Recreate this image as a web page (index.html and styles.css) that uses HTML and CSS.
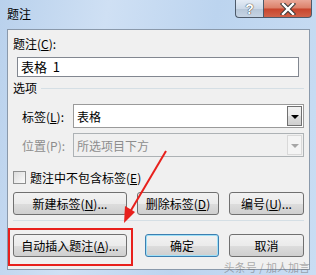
FILE: index.html
```html
<!DOCTYPE html>
<html lang="zh-CN">
<head>
	<meta charset="UTF-8">
	<title>题注</title>
	<link rel="stylesheet" href="styles.css">
</head>
<body>
	<div class="window">
		<div class="titlebar">
			<div class="title">题注</div>
			<div class="btn_help">?</div>
			<div class="btn_close">
				<svg width="16" height="12" viewBox="0 0 16 12">
					<path d="M3 1 L13 11 M13 1 L3 11" stroke="#3a3a3a" stroke-width="4.4" stroke-linecap="square"/>
					<path d="M3 1 L13 11 M13 1 L3 11" stroke="#fff" stroke-width="2.4" stroke-linecap="square"/>
				</svg>
			</div>
		</div>
		<div class="client">
			<div class="label_top">题注(<u>C</u>):</div>
			<div class="textbox">表格&nbsp;&nbsp;1</div>
			<div class="group">
				<span>选项</span>
				<div class="group_line"></div>
			</div>
			<div class="row row_first">
				<div class="row_label">标签(<u>L</u>):</div>
				<div class="combo">
					<span>表格</span>
					<div class="combo_btn"><i class="arrow"></i></div>
				</div>
			</div>
			<div class="row disabled">
				<div class="row_label">位置(P):</div>
				<div class="combo">
					<span>所选项目下方</span>
					<div class="combo_btn"><i class="arrow"></i></div>
				</div>
			</div>
			<div class="check_row">
				<div class="checkbox"></div>
				<span>题注中不包含标签(<u>E</u>)</span>
			</div>
			<div class="btn_row">
				<div class="btn w_new">新建标签(<u>N</u>)...</div>
				<div class="btn w_del">删除标签(<u>D</u>)</div>
				<div class="btn w_num">编号(<u>U</u>)...</div>
			</div>
			<div class="sep"></div>
			<div class="btn_row btn_row_last">
				<div class="btn w_new">自动插入题注(<u>A</u>)...</div>
				<div class="btn btn_default w_ok">确定</div>
				<div class="btn w_num">取消</div>
			</div>
		</div>

		<div class="mark_box"></div>
		<svg class="mark_arrow" width="316" height="275" viewBox="0 0 316 275">
			<line x1="166" y1="151" x2="130" y2="212" stroke="#e8201c" stroke-width="2"/>
			<polygon points="124,223 125,206 135,212" fill="#e8201c"/>
		</svg>
		<div class="watermark">头条号 / 加人加言</div>
	</div>
</body>
</html>
```

FILE: styles.css
```css
html, body {
	margin: 0;
	padding: 0;
}
body {
	font-family: "Noto Sans CJK SC", "Liberation Sans", sans-serif;
	font-size: 12px;
	color: #000;
}
u {
	text-decoration: underline;
	text-underline-offset: 1px;
}
.window {
	position: relative;
	width: 316px;
	height: 275px;
	overflow: hidden;
	background: linear-gradient(100deg, #b9d1ec 0%, #cfe0f4 30%, #bcd4ef 60%, #c9ddf3 100%);
}
.titlebar {
	display: flex;
	height: 29px;
}
.title {
	padding: 6px 0 0 7px;
	line-height: 16px;
	font-size: 12px;
}
.btn_help, .btn_close {
	height: 18px;
	border: 1px solid #4d5a6a;
	border-top: none;
	box-sizing: border-box;
	display: flex;
	align-items: center;
	justify-content: center;
}
.btn_help {
	margin-left: auto;
	width: 28px;
	border-right: none;
	border-radius: 0 0 0 4px;
	background: linear-gradient(#e4ecf6 0%, #ccd9e8 50%, #b6c6d8 51%, #c6d4e4 100%);
	color: #fff;
	font-family: "Liberation Sans", sans-serif;
	font-weight: bold;
	font-size: 14px;
	text-shadow: 0 0 1px #333, 0 0 1px #333;
}
.btn_close {
	width: 49px;
	margin-right: 4px;
	border-radius: 0 0 4px 0;
	background: linear-gradient(#e9a797 0%, #dc8069 48%, #c8442c 52%, #d0634a 100%);
}
.client {
	margin: 0 6px 0 7px;
	height: 241px;
	box-sizing: border-box;
	border: 1px solid #8a99ab;
	background: #f0f0f0;
	padding-left: 5px;
}
.label_top {
	margin-top: 6px;
	line-height: 16px;
}
.textbox {
	margin: 5px 0 0 4px;
	width: 282px;
	height: 20px;
	box-sizing: border-box;
	border: 1px solid #828790;
	background: #fff;
	padding-left: 3px;
	font-size: 13px;
	line-height: 18px;
}
.group {
	display: flex;
	align-items: center;
	margin-top: 3px;
	line-height: 16px;
}
.group_line {
	flex: 1;
	height: 1px;
	margin: 1px 5px 0 4px;
	background: #d5dfe5;
}
.row {
	display: flex;
	align-items: center;
	height: 24px;
	margin-top: 5px;
}
.row_first {
	margin-top: 8px;
}
.row_label {
	width: 51px;
	padding-left: 9px;
	font-size: 12px;
}
.combo {
	display: flex;
	align-items: center;
	width: 231px;
	height: 24px;
	box-sizing: border-box;
	border: 1px solid #9a9a9a;
	background: #fff;
	padding: 1px;
}
.combo span {
	flex: 1;
	padding-left: 2px;
	font-size: 12px;
}
.combo_btn {
	width: 15px;
	height: 20px;
	box-sizing: border-box;
	border: 1px solid #707070;
	background: linear-gradient(#f2f2f2 0%, #ebebeb 50%, #dddddd 51%, #cfcfcf 100%);
	display: flex;
	align-items: center;
	justify-content: center;
}
.arrow {
	width: 0;
	height: 0;
	border-left: 4px solid transparent;
	border-right: 4px solid transparent;
	border-top: 4px solid #000;
	margin-top: 1px;
}
.disabled {
	color: #8d8d8d;
}
.disabled .combo {
	border-color: #adb2b5;
	background: #f0f0f0;
}
.disabled .combo_btn {
	border-color: #d9d9d9;
	background: #f4f4f4;
}
.disabled .arrow {
	border-top-color: #a6a6a6;
}
.check_row {
	display: flex;
	align-items: center;
	margin-top: 12px;
	height: 16px;
}
.checkbox {
	width: 13px;
	height: 13px;
	box-sizing: border-box;
	border: 1px solid #8e8f8f;
	background: linear-gradient(135deg, #dcdcdc, #fbfbfb);
	margin-right: 4px;
}
.btn_row {
	display: flex;
	margin-top: 7px;
}
.btn {
	height: 23px;
	box-sizing: border-box;
	border: 1px solid #707070;
	border-radius: 3px;
	background: linear-gradient(#f2f2f2 0%, #ebebeb 50%, #dddddd 51%, #cfcfcf 100%);
	display: flex;
	align-items: center;
	justify-content: center;
	font-size: 12px;
}
.w_new {
	width: 114px;
}
.w_del {
	width: 82px;
	margin-left: 10px;
}
.w_ok {
	width: 74px;
	margin-left: 18px;
}
.w_num {
	width: 75px;
	margin-left: 10px;
}
.btn_default {
	border-color: #3c7fb1;
	box-shadow: inset 0 0 0 1px #9fe0f7;
}
.sep {
	height: 1px;
	margin: 5px 5px 0 0;
	background: #d5dfe5;
}
.btn_row_last {
	margin-top: 13px;
}
.mark_box {
	position: absolute;
	left: 8px;
	top: 228px;
	width: 125px;
	height: 38px;
	box-sizing: border-box;
	border: 2px solid #e8201c;
}
.mark_arrow {
	position: absolute;
	left: 0;
	top: 0;
	pointer-events: none;
}
.watermark {
	position: absolute;
	right: 6px;
	bottom: 2px;
	font-size: 11px;
	line-height: 12px;
	color: rgba(110, 110, 110, 0.55);
}
```
